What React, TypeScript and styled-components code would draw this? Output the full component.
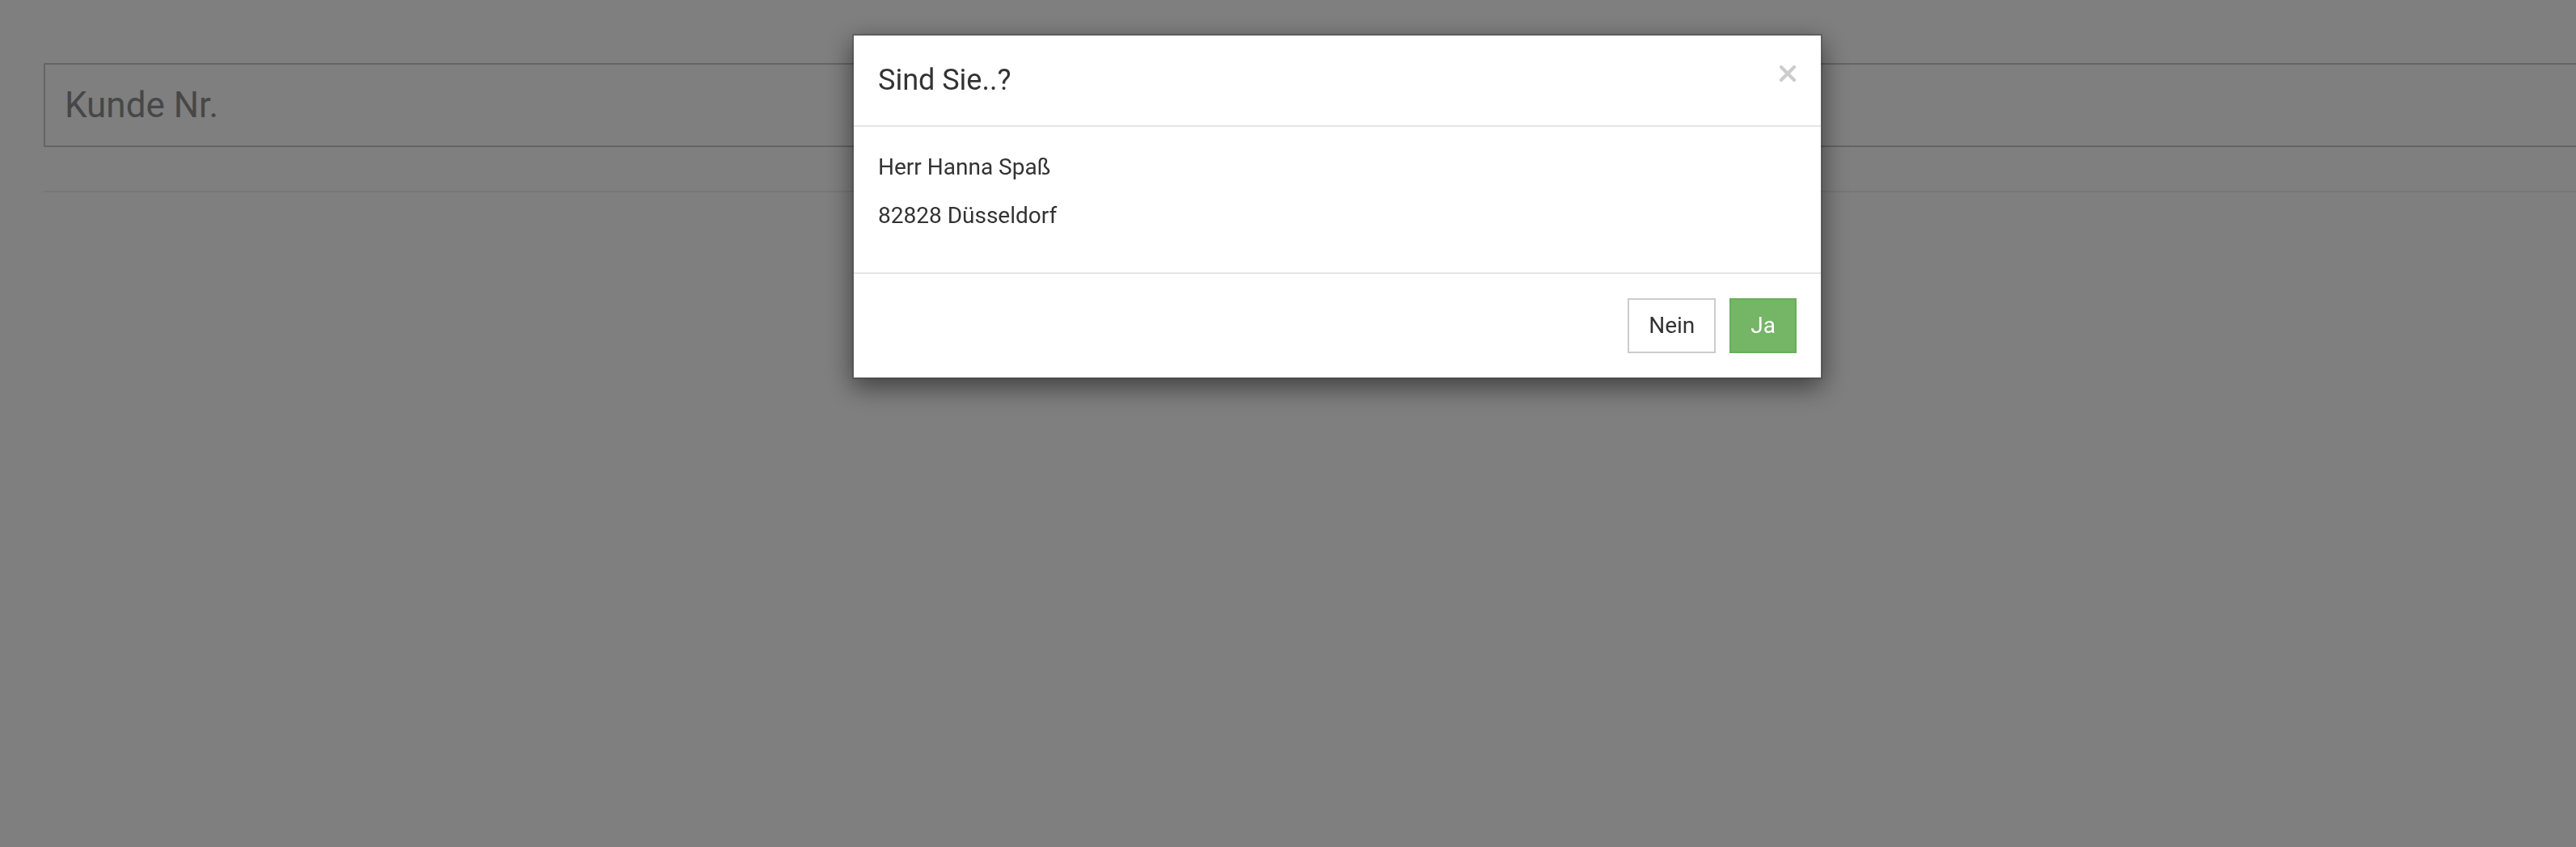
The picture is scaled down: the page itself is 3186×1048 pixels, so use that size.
import React from "react";
import styled, { createGlobalStyle } from "styled-components";

const GlobalStyle = createGlobalStyle`
  html, body {
    margin: 0;
    padding: 0;
    background: #ffffff;
    overflow: hidden;
  }
  body {
    font-family: Roboto, "Liberation Sans", Arial, sans-serif;
    color: #333333;
  }
  * { box-sizing: border-box; }
`;

const Page = styled.div`
  width: 3186px;
  height: 1048px;
  padding: 78px 0 0 54px;
`;

const CustomerInput = styled.input`
  display: block;
  width: 3200px;
  height: 104px;
  padding: 0 24px;
  border: 2px solid #c8c8c8;
  border-radius: 0;
  background: #ffffff;
  font-family: Roboto, "Liberation Sans", Arial, sans-serif;
  font-size: 44px;
  color: #555555;
  outline: none;
  &::placeholder {
    color: #8e8e8e;
    opacity: 1;
  }
`;

const Rule = styled.hr`
  width: 3200px;
  margin: 54px 0 0;
  border: 0;
  border-top: 2px solid #eeeeee;
`;

const Backdrop = styled.div`
  position: fixed;
  inset: 0;
  background: rgba(0, 0, 0, 0.5);
`;

const Dialog = styled.div`
  width: 1200px;
  margin: 42px 0 0 1054px;
  background: #ffffff;
  background-clip: padding-box;
  border: 2px solid rgba(0, 0, 0, 0.2);
  box-shadow: 0 10px 30px rgba(0, 0, 0, 0.5);
`;

const Header = styled.div`
  display: flex;
  align-items: flex-start;
  justify-content: space-between;
  padding: 30px;
  border-bottom: 2px solid #e5e5e5;
`;

const Title = styled.h4`
  margin: 0;
  font-size: 36px;
  font-weight: 400;
  line-height: 51px;
  color: #333333;
`;

const CloseButton = styled.button`
  display: flex;
  align-items: center;
  justify-content: center;
  width: 22px;
  height: 22px;
  margin-top: 6px;
  padding: 0;
  border: 0;
  background: transparent;
  cursor: pointer;
`;

const Body = styled.div`
  padding: 30px;
`;

const Line = styled.p`
  margin: 0 0 20px;
  font-size: 28px;
  line-height: 40px;
  color: #333333;
`;

const Footer = styled.div`
  display: flex;
  justify-content: flex-end;
  gap: 17px;
  padding: 30px;
  border-top: 2px solid #e5e5e5;
`;

const Button = styled.button<{ $primary?: boolean }>`
  padding: 12px 24px;
  font-family: Roboto, "Liberation Sans", Arial, sans-serif;
  font-size: 28px;
  line-height: 40px;
  border-radius: 0;
  cursor: pointer;
  border: 2px solid ${(p) => (p.$primary ? "#69ae5b" : "#cccccc")};
  background: ${(p) => (p.$primary ? "#74b566" : "#ffffff")};
  color: ${(p) => (p.$primary ? "#ffffff" : "#333333")};
`;

const CloseIcon = () => (
  <svg width="20" height="20" viewBox="0 0 20 20">
    <path
      d="M2 2 L18 18 M18 2 L2 18"
      stroke="#cccccc"
      strokeWidth="4.2"
      strokeLinecap="square"
      fill="none"
    />
  </svg>
);

export default function App() {
  return (
    <>
      <GlobalStyle />
      <Page>
        <CustomerInput placeholder="Kunde Nr." />
        <Rule />
      </Page>
      <Backdrop>
        <Dialog>
          <Header>
            <Title>Sind Sie..?</Title>
            <CloseButton aria-label="Schließen">
              <CloseIcon />
            </CloseButton>
          </Header>
          <Body>
            <Line>Herr Hanna Spaß</Line>
            <Line>82828 Düsseldorf</Line>
          </Body>
          <Footer>
            <Button>Nein</Button>
            <Button $primary>Ja</Button>
          </Footer>
        </Dialog>
      </Backdrop>
    </>
  );
}
